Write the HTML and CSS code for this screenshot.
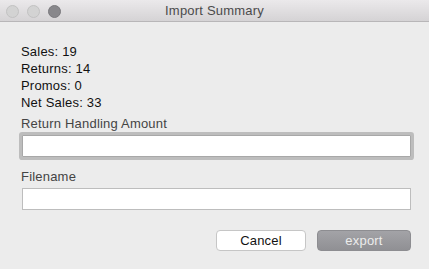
FILE: index.html
```html
<!DOCTYPE html>
<html lang="en">
<head>
    <meta charset="UTF-8">
    <title>Import Summary</title>
    <link rel="stylesheet" href="styles.css">
</head>
<body>
    <div class="window">
        <div class="titlebar">
            <div class="lights">
                <span class="light"></span>
                <span class="light"></span>
                <span class="light light-active"></span>
            </div>
            <div class="title">Import Summary</div>
        </div>

        <div class="content">
            <div class="summary">
                <div>Sales: 19</div>
                <div>Returns: 14</div>
                <div>Promos: 0</div>
                <div>Net Sales: 33</div>
            </div>

            <label class="field-label" for="handling">Return Handling Amount</label>
            <input type="text" id="handling" class="field-input field-focus">

            <label class="field-label label-second" for="filename">Filename</label>
            <input type="text" id="filename" class="field-input">

            <div class="buttons">
                <button class="btn btn-cancel">Cancel</button>
                <button class="btn btn-export">export</button>
            </div>
        </div>
    </div>
</body>
</html>
```

FILE: styles.css
```css
body {
    margin: 0;
    font-family: 'Liberation Sans', Arial, sans-serif;
    font-size: 13px;
    letter-spacing: 0.2px;
    background-color: #ececec;
}

.window {
    width: 429px;
    height: 269px;
    background-color: #ececec;
}

.titlebar {
    position: relative;
    height: 21px;
    border-bottom: 1px solid #b8b6b8;
    background: linear-gradient(#ebe9eb, #d5d3d5);
}

.lights {
    display: flex;
    gap: 8px;
    padding: 5px 0 0 6px;
}

.light {
    width: 11px;
    height: 11px;
    border-radius: 50%;
    background-color: #d3d3d3;
    border: 0.5px solid #c2c2c2;
}

.light-active {
    background-color: #88878b;
    border-color: #7a797d;
}

.title {
    position: absolute;
    top: 0;
    left: 0;
    right: 0;
    text-align: center;
    line-height: 22px;
    color: #4b4b4b;
}

.content {
    padding: 21px 18px 0 21px;
}

.summary {
    line-height: 17px;
    color: #111;
}

.field-label {
    display: block;
    margin-top: 4px;
    line-height: 17px;
    color: #444;
}

.label-second {
    margin-top: 11px;
}

.field-input {
    display: block;
    box-sizing: border-box;
    width: 389px;
    height: 22px;
    margin: 3px 0 0 1px;
    padding: 0 4px;
    border: 1px solid #bdbdbd;
    background-color: #fff;
    outline: none;
    font: inherit;
}

.field-focus {
    border-color: #a8a8a8;
    box-shadow: 0 0 0 3px #bdbdbd;
    border-radius: 1px;
}

.buttons {
    display: flex;
    justify-content: flex-end;
    gap: 11px;
    margin-top: 20px;
}

.btn {
    height: 21px;
    padding: 0;
    border-radius: 4px;
    font: inherit;
    font-size: 13px;
    letter-spacing: 0.2px;
}

.btn-cancel {
    width: 90px;
    background-color: #fff;
    border: 1px solid #c6c6c6;
    color: #111;
}

.btn-export {
    width: 94px;
    background: linear-gradient(#a3a3a7, #909094);
    border: 1px solid #8d8d91;
    color: #ececec;
}
```
